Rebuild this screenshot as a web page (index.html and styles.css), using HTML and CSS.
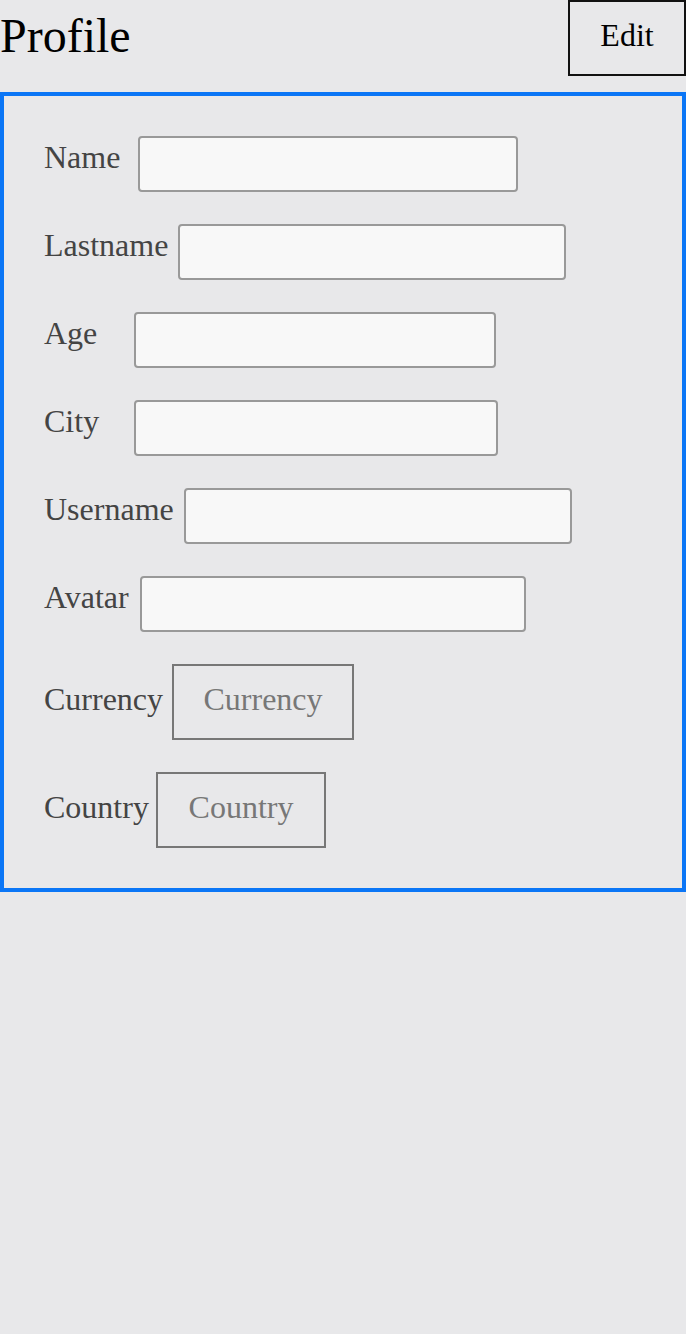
FILE: index.html
```html
<!DOCTYPE html>
<html lang="en">
<head>
<meta charset="utf-8">
<title>Profile</title>
<link rel="stylesheet" href="styles.css">
</head>
<body>
<header class="header">
  <h1 class="title">Profile</h1>
  <button class="edit-btn" type="button">Edit</button>
</header>
<form class="profile-card">
  <div class="row row--name"><label class="label">Name</label><input class="field" type="text"></div>
  <div class="row row--lastname"><label class="label">Lastname</label><input class="field" type="text"></div>
  <div class="row row--age"><label class="label">Age</label><input class="field" type="text"></div>
  <div class="row row--city"><label class="label">City</label><input class="field" type="text"></div>
  <div class="row row--username"><label class="label">Username</label><input class="field" type="text"></div>
  <div class="row row--avatar"><label class="label">Avatar</label><input class="field" type="text"></div>
  <div class="row row--select row--currency"><label class="label">Currency</label><div class="select">Currency</div></div>
  <div class="row row--select row--country"><label class="label">Country</label><div class="select">Country</div></div>
</form>
</body>
</html>
```
FILE: styles.css
```css
html, body {
  margin: 0;
  padding: 0;
  background: #e8e8ea;
  font-family: "Liberation Serif", "Times New Roman", serif;
  height: 100%;
}

.header {
  display: flex;
  justify-content: space-between;
  align-items: flex-start;
  height: 76px;
}

.title {
  margin: 8px 0 0;
  font-size: 48px;
  font-weight: normal;
  line-height: 55px;
  color: #000;
}

.edit-btn {
  box-sizing: border-box;
  height: 76px;
  width: 118px;
  padding: 0 0 6px;
  border: 2px solid #111;
  background: transparent;
  font-family: inherit;
  font-size: 32px;
  color: #000;
}

.profile-card {
  margin-top: 16px;
  border: 4px solid #0b76f6;
  padding: 40px;
  display: flex;
  flex-direction: column;
  gap: 32px;
}

.row {
  display: flex;
  align-items: flex-start;
}

.label {
  flex: none;
  width: var(--lw);
  font-size: 32px;
  line-height: 36px;
  padding-top: 3px;
  color: #444;
}

.field {
  box-sizing: border-box;
  width: var(--iw);
  height: 56px;
  margin: 0;
  border: 2px solid #999;
  border-radius: 4px;
  background: #f8f8f8;
  font-family: inherit;
  font-size: 24px;
}

.row--select {
  align-items: center;
}

.row--select .label {
  padding-top: 0;
  padding-bottom: 6px;
}

.select {
  box-sizing: border-box;
  width: var(--iw);
  height: 76px;
  border: 2px solid #777;
  display: flex;
  align-items: center;
  justify-content: center;
  padding-bottom: 6px;
  font-size: 32px;
  color: #777;
}

.row--name { --lw: 94px; --iw: 380px; }
.row--lastname { --lw: 134px; --iw: 388px; }
.row--age { --lw: 90px; --iw: 362px; }
.row--city { --lw: 90px; --iw: 364px; }
.row--username { --lw: 140px; --iw: 388px; }
.row--avatar { --lw: 96px; --iw: 386px; }
.row--currency { --lw: 128px; --iw: 182px; }
.row--country { --lw: 112px; --iw: 170px; }
```
